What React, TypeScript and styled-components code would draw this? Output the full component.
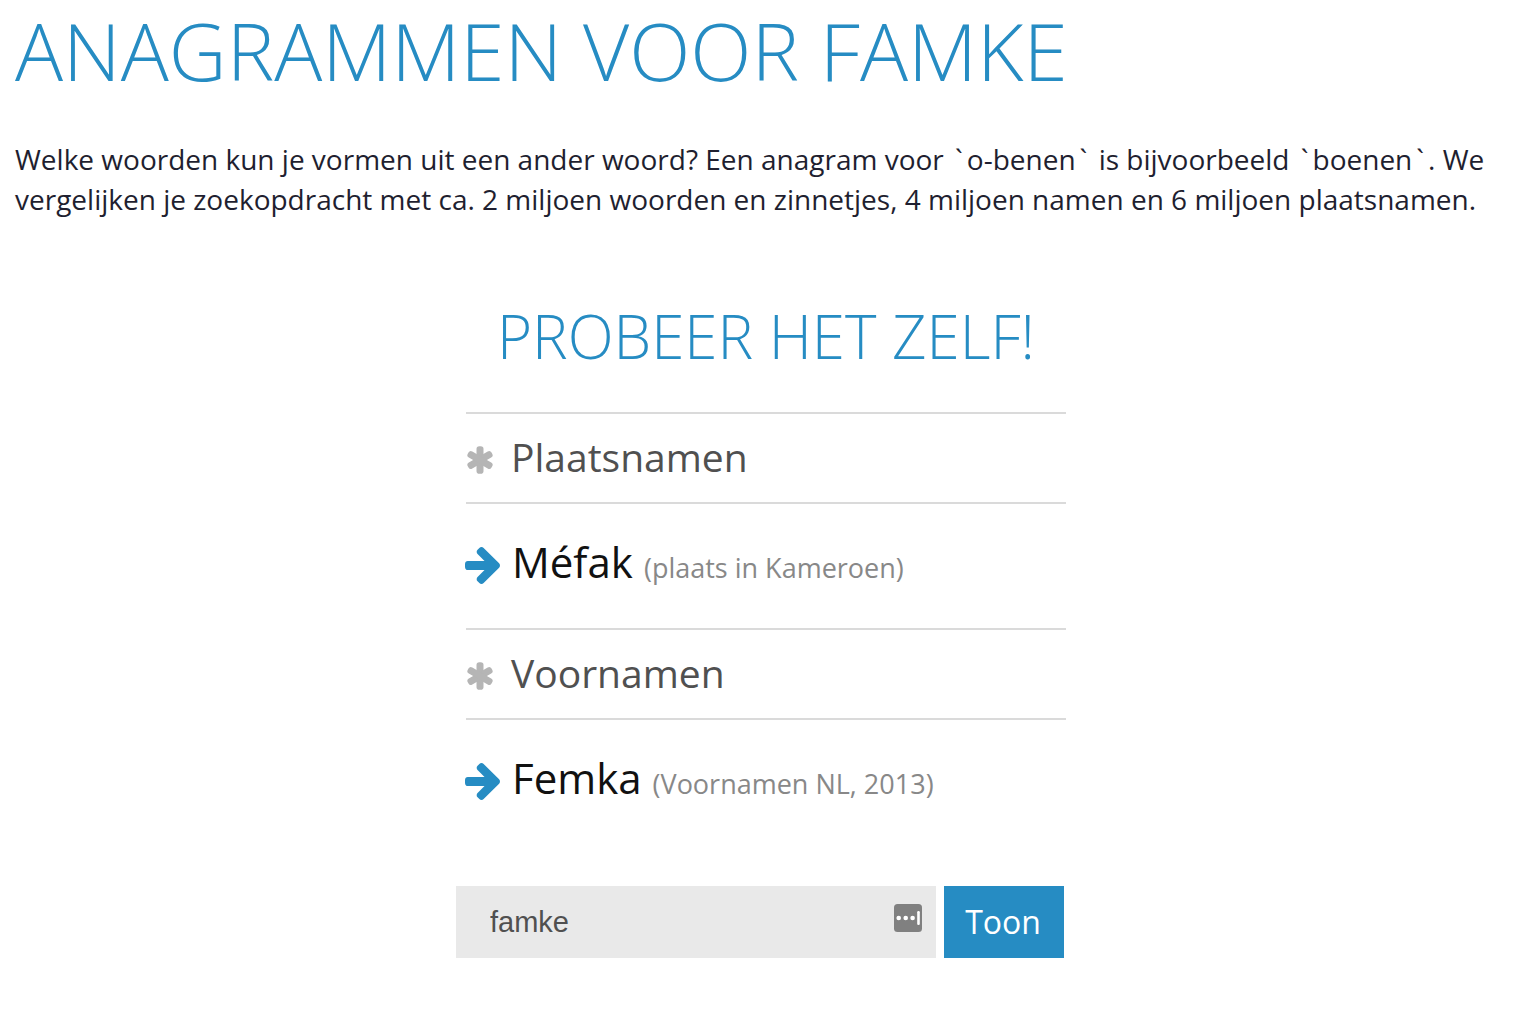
import React, { useState } from "react";
import styled, { createGlobalStyle } from "styled-components";

const BLUE = "#268cc3";

const GlobalStyle = createGlobalStyle`
  *, *::before, *::after { box-sizing: border-box; }
  body {
    margin: 0;
    background: #fff;
    color: #1f1f30;
    font-family: "Open Sans", sans-serif;
  }
`;

const Page = styled.main`
  display: flex;
  flex-direction: column;
  padding: 0 3px 76px 15px;
`;

const Title = styled.h1`
  margin: 0;
  color: ${BLUE};
  font-size: 80px;
  font-weight: 300;
  line-height: 100px;
  text-transform: uppercase;
`;

const Intro = styled.p`
  margin: 39px 0 0;
  font-size: 28px;
  line-height: 40px;
`;

const Tick = styled.span`
  padding: 0 4px;
`;

const TryIt = styled.section`
  display: flex;
  flex-direction: column;
  width: 100%;
  max-width: 600px;
  margin: 77px auto 0;
`;

const Subtitle = styled.h2`
  margin: 0 0 36px;
  color: ${BLUE};
  font-size: 60px;
  font-weight: 300;
  line-height: 80px;
  text-align: center;
  text-transform: uppercase;
`;

const GroupTitle = styled.h3`
  display: flex;
  align-items: center;
  gap: 17px;
  height: 92px;
  margin: 0;
  padding-bottom: 2px;
  border: solid #dadada;
  border-width: 2px 0;
  color: #505050;
  font-size: 39px;
  font-weight: 400;
  line-height: 52px;
  svg {
    margin-top: 6px;
    color: #b5b5b5;
  }
`;

const Results = styled.ul`
  margin: 0 0 0 -1px;
  padding: 29px 0 31px;
  list-style: none;
`;

const Result = styled.li`
  display: flex;
  align-items: center;
  gap: 12px;
  height: 64px;
  svg { color: ${BLUE}; }
`;

const Entry = styled.span`
  display: flex;
  align-items: baseline;
  gap: 11px;
  line-height: 60px;
`;

const Word = styled.span`
  color: #111;
  font-size: 42px;
`;

const Source = styled.small`
  color: #888;
  font-size: 27px;
`;

const SearchForm = styled.form`
  display: flex;
  gap: 8px;
  margin: 42px 2px 0 -10px;
`;

const Field = styled.label`
  display: flex;
  flex: 1;
  align-items: center;
  height: 72px;
  padding: 0 14px 0 34px;
  background: #e9e9e9;
  svg { margin-bottom: 8px; }
`;

const WordInput = styled.input`
  flex: 1;
  min-width: 0;
  padding: 0;
  border: 0;
  outline: 0;
  background: transparent;
  color: #505050;
  font-family: "Liberation Sans", Arial, sans-serif;
  font-size: 29px;
`;

const ShowButton = styled.button`
  width: 120px;
  padding: 0 2px 2px 0;
  border: 0;
  background: ${BLUE};
  color: #fff;
  font-family: inherit;
  font-size: 32px;
  cursor: pointer;
`;

const groups = [
  { name: "Plaatsnamen", words: [{ word: "Méfak", source: "plaats in Kameroen" }] },
  { name: "Voornamen", words: [{ word: "Femka", source: "Voornamen NL, 2013" }] },
];

const AsteriskIcon = () => (
  <svg width="28" height="28" viewBox="0 0 28 28" fill="currentColor" aria-hidden="true">
    {[0, 60, 120].map((angle) => (
      <rect key={angle} x="10.5" y="0.3" width="7" height="27.4" rx="2.8" transform={`rotate(${angle} 14 14)`} />
    ))}
  </svg>
);

const ArrowIcon = () => (
  <svg width="35" height="37" viewBox="128 181 1472 1558" fill="currentColor" aria-hidden="true">
    <path d="M1600 960q0 54-37 91l-651 651q-39 37-91 37-51 0-90-37l-75-75q-38-38-38-91t38-91l293-293h-704q-52 0-84.5-37.5t-32.5-90.5v-128q0-53 32.5-90.5t84.5-37.5h704l-293-294q-38-36-38-90t38-90l75-75q38-38 90-38 53 0 91 38l651 651q37 35 37 90z" />
  </svg>
);

const FillIcon = () => (
  <svg width="28" height="28" viewBox="0 0 28 28" aria-hidden="true">
    <rect width="28" height="28" rx="3.5" fill="#808080" />
    <g fill="#fff">
      <circle cx="4.7" cy="14" r="2.3" />
      <circle cx="11.7" cy="14" r="2.3" />
      <circle cx="18.6" cy="14" r="2.3" />
      <rect x="23.2" y="7" width="2.6" height="14" rx="1.2" />
    </g>
  </svg>
);

export default function App() {
  const [query, setQuery] = useState("famke");
  return (
    <>
      <GlobalStyle />
      <Page>
        <Title>Anagrammen voor famke</Title>
        <Intro>
          Welke woorden kun je vormen uit een ander woord? Een anagram voor <Tick>`</Tick>o-benen
          <Tick>`</Tick> is bijvoorbeeld <Tick>`</Tick>boenen<Tick>`</Tick>. We vergelijken je
          zoekopdracht met ca. 2 miljoen woorden en zinnetjes, 4 miljoen namen en 6 miljoen
          plaatsnamen.
        </Intro>
        <TryIt>
          <Subtitle>Probeer het zelf!</Subtitle>
          {groups.map((group) => (
            <React.Fragment key={group.name}>
              <GroupTitle>
                <AsteriskIcon />
                {group.name}
              </GroupTitle>
              <Results>
                {group.words.map(({ word, source }) => (
                  <Result key={word}>
                    <ArrowIcon />
                    <Entry>
                      <Word>{word}</Word>
                      <Source>({source})</Source>
                    </Entry>
                  </Result>
                ))}
              </Results>
            </React.Fragment>
          ))}
          <SearchForm onSubmit={(event) => event.preventDefault()}>
            <Field>
              <WordInput aria-label="Woord" value={query} onChange={(event) => setQuery(event.target.value)} />
              <FillIcon />
            </Field>
            <ShowButton type="submit">Toon</ShowButton>
          </SearchForm>
        </TryIt>
      </Page>
    </>
  );
}
